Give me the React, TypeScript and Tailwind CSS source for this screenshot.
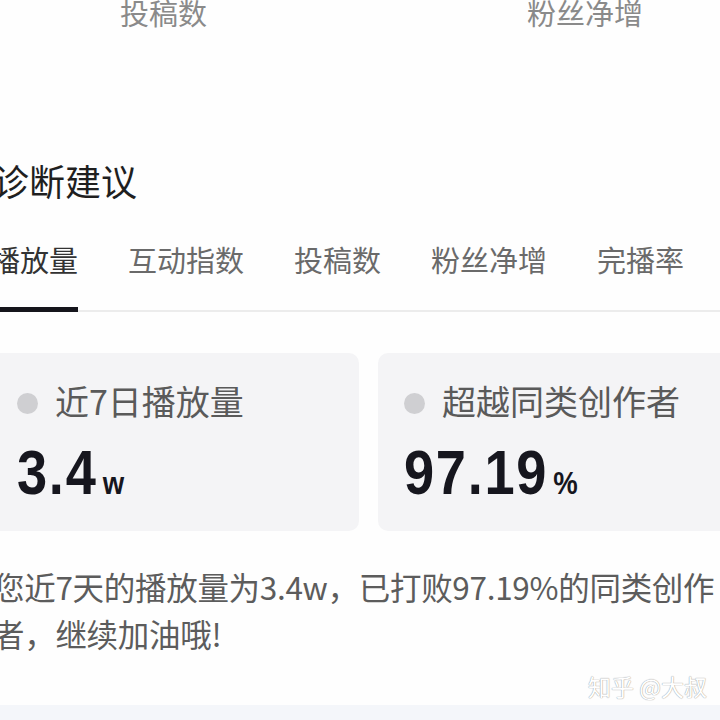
const tabs = ['播放量', '互动指数', '投稿数', '粉丝净增', '完播率']

const cjk = { fontFamily: '"Noto Sans CJK SC", "Noto Sans", sans-serif' }
const num = { fontFamily: '"Liberation Sans", Arial, sans-serif' }

export default function App() {
  return (
    <div className="relative w-[720px] h-[720px] overflow-hidden bg-[#fefefe]" style={cjk}>
      {/* previous section, scrolled off the top */}
      <div className="flex -mt-[8px] h-[40px] items-center text-[29px] leading-none text-[#8a8a8a]">
        <span className="ml-[120px] w-[88px]">投稿数</span>
        <span className="ml-[319px]">粉丝净增</span>
      </div>

      <div className="-ml-[7px] w-[753px]">
        <h2 className="mt-[128px] h-[40px] flex items-center text-[36px] leading-none text-[#1f1f1f]">
          诊断建议
        </h2>

        {/* tabs */}
        <div className="mt-[38px] -ml-[2px] flex gap-[50px] border-b-2 border-[#ececec]">
          {tabs.map((t, i) => (
            <div key={t} className="relative h-[72px] flex items-start">
              <span
                className={
                  'text-[29px] leading-none pt-[7px] ' + (i === 0 ? 'text-[#333]' : 'text-[#6a6a6a]')
                }
              >
                {t}
              </span>
              {i === 0 && <div className="absolute left-0 right-0 -bottom-[2px] h-[5px] bg-[#15151c]" />}
            </div>
          ))}
        </div>

        {/* stat cards */}
        <div className="mt-[41px] grid grid-cols-2 gap-[19px] -ml-[2px]">
          <StatCard label="近7日播放量" value="3.4" unit="w" />
          <StatCard label="超越同类创作者" value="97.19" unit="%" />
        </div>

        <p className="mt-[32px] w-[728px] text-[31.5px] leading-[47px] text-[#5c5c5c] tracking-[-0.3px]">
          您近7天的播放量为3.4w，已打败97.19%的同类创作者，继续加油哦!
        </p>
      </div>

      {/* watermark */}
      <div
        className="absolute left-[588px] top-[675px] text-[23px] leading-none text-white"
        style={{ textShadow: '0 0 1px #9a9a9a, 0 0 1px #b0b0b0' }}
      >
        知乎 @大叔
      </div>

      <div className="absolute left-0 right-0 bottom-0 h-[15px] bg-[#f4f6fa]" />
    </div>
  )
}

function StatCard({ label, value, unit }: { label: string; value: string; unit: string }) {
  return (
    <div className="h-[178px] rounded-[10px] bg-[#f4f4f6] pl-[26px] pt-[30px]">
      <div className="flex items-center gap-[17px] h-[40px]">
        <span className="w-[21px] h-[21px] rounded-full bg-[#cfcfd2]" />
        <span className="text-[34px] leading-none text-[#5a5a5a] -mt-[4px]">{label}</span>
      </div>
      <div className="mt-[18px] flex items-baseline text-[#16161e] font-bold origin-left scale-x-[0.86]" style={num}>
        <span className="text-[63px] leading-none tracking-[2px]">{value}</span>
        <span className="ml-[6px] text-[32px] leading-none">{unit}</span>
      </div>
    </div>
  )
}
